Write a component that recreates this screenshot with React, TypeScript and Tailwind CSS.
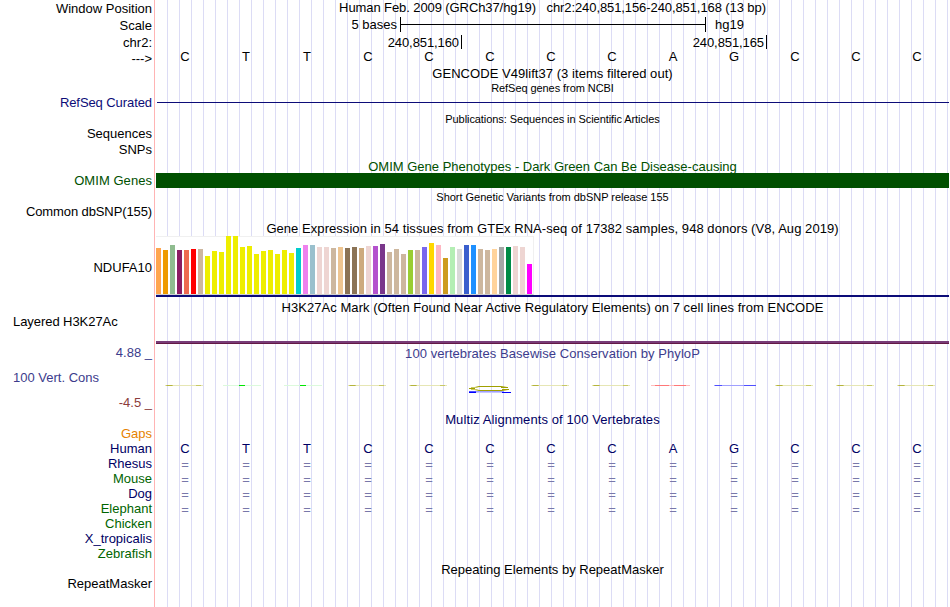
import { ReactNode } from 'react';
import clsx from 'clsx';

type Line = {
  text: string;
  className: string;
};

// track names, with the gap above each one
const labels: Line[] = [
  { text: 'Window Position', className: 'mt-px' },
  { text: 'Scale', className: 'mt-[2px]' },
  { text: 'chr2:', className: 'mt-[2px]' },
  { text: '--->', className: 'mt-px' },
  {
    text: 'RefSeq Curated',
    className: 'mt-[29px] text-[#0c0c78] tracking-[-0.08px]',
  },
  { text: 'Sequences', className: 'mt-[16px]' },
  { text: 'SNPs', className: 'mt-px' },
  { text: 'OMIM Genes', className: 'mt-[16px] text-[#005000] tracking-[0.05px]' },
  { text: 'Common dbSNP(155)', className: 'mt-[16px] tracking-[-0.11px]' },
  { text: 'NDUFA10', className: 'mt-[41px]' },
  {
    text: 'Layered H3K27Ac',
    className: 'mt-[39px] self-start ml-[13px] tracking-[-0.06px]',
  },
  { text: '4.88 _', className: 'mt-[16px] text-[#3c3c8c]' },
  {
    text: '100 Vert. Cons',
    className: 'mt-[10px] self-start ml-[13px] text-[#3c3c8c]',
  },
  { text: '-4.5 _', className: 'mt-[10px] text-[#8c3c3c]' },
  { text: 'Gaps', className: 'mt-[16px] text-[#e68200]' },
  { text: 'Human', className: 'text-[#000064]' },
  { text: 'Rhesus', className: 'text-[#000064]' },
  { text: 'Mouse', className: 'text-[#006400]' },
  { text: 'Dog', className: 'text-[#000064]' },
  { text: 'Elephant', className: 'text-[#006400]' },
  { text: 'Chicken', className: 'text-[#006400]' },
  { text: 'X_tropicalis', className: 'text-[#000064]' },
  { text: 'Zebrafish', className: 'text-[#006400]' },
  { text: 'RepeatMasker', className: 'mt-[15px]' },
];

const bases = 'CTTCCCCCAGCCC'.split('');

// one entry per GTEx tissue: [height, color]
const tissues: [number, string][] = [
  [46, '#ffa54f'],
  [44, '#ee9a00'],
  [49, '#8fbc8f'],
  [44, '#8b1c62'],
  [44, '#ee6a50'],
  [45, '#ff0000'],
  [45, '#cdb79e'],
  [38, '#eeee00'],
  [43, '#eeee00'],
  [42, '#eeee00'],
  [58, '#eeee00'],
  [58, '#eeee00'],
  [47, '#eeee00'],
  [48, '#eeee00'],
  [40, '#eeee00'],
  [43, '#eeee00'],
  [44, '#eeee00'],
  [40, '#eeee00'],
  [44, '#eeee00'],
  [41, '#eeee00'],
  [46, '#00cdcd'],
  [49, '#ee82ee'],
  [49, '#9ac0cd'],
  [47, '#eed5d2'],
  [47, '#eed5d2'],
  [46, '#cdb79e'],
  [47, '#eec591'],
  [46, '#8b7355'],
  [47, '#8b7355'],
  [46, '#cdaa7d'],
  [48, '#eed5d2'],
  [48, '#b452cd'],
  [50, '#7a378b'],
  [42, '#cdb79e'],
  [45, '#cdb79e'],
  [40, '#cdb79e'],
  [44, '#9acd32'],
  [44, '#cdb79e'],
  [47, '#7a67ee'],
  [51, '#ffd700'],
  [49, '#ffb6c1'],
  [36, '#cd9b1d'],
  [47, '#b4eeb4'],
  [45, '#d9d9d9'],
  [49, '#3a5fcd'],
  [49, '#1e90ff'],
  [45, '#cdb79e'],
  [44, '#cdb79e'],
  [45, '#ffd39b'],
  [47, '#a6a6a6'],
  [47, '#008b45'],
  [48, '#eed5d2'],
  [47, '#eed5d2'],
  [30, '#ff00ff'],
];

const Title = ({
  className,
  children,
}: {
  className?: string;
  children: ReactNode;
}) => (
  <h2 className={clsx('h-[15px] text-center whitespace-pre', className)}>
    {children}
  </h2>
);

const BaseRow = ({
  className,
  items,
}: {
  className?: string;
  items: ReactNode[];
}) => (
  <div
    className={clsx(
      'grid h-[15px] w-[793px] grid-cols-13 text-center',
      className
    )}
  >
    {items.map((item, i) => (
      <span key={i}>{item}</span>
    ))}
  </div>
);

// flattened sequence logo letter
const LogoMark = ({ base, tall }: { base: string; tall: boolean }) => {
  if (tall) {
    return (
      <svg className="ml-[9px] block" width="44" height="8" fill="none">
        <path
          d="M39 2.5 33 1.5H11L3 3.5 11 5.5H34L40 4.5"
          stroke="#a0a000"
          strokeWidth="1.2"
        />
        <path d="M1 3.5H7M33 2.5H40M34 4.5H41" stroke="#a0a000" />
        <path d="M3 2.5H9M3 4.5H9" stroke="#c8c864" />
        <path d="M1 6.5H8" stroke="#5050ff" />
        <path d="M8 6.5H36" stroke="#a0a0ff" />
        <path d="M1 7.5H8M34 7.5H43" stroke="#0000ff" />
        <path d="M8 7.5H34" stroke="#c8c8ff" />
      </svg>
    );
  }
  return (
    <svg
      className={clsx(
        'block',
        base === 'T' ? 'ml-[8px]' : base === 'A' ? 'ml-[9px]' : 'ml-[10px]'
      )}
      width="44"
      height="1"
    >
      {base === 'C' && (
        <>
          <path d="M1 .5H39" stroke="#e6e6b4" />
          <path d="M2 .5H9M32 .5H37" stroke="#c8c864" />
          <path d="M3 .5H8" stroke="#b4b43c" />
        </>
      )}
      {base === 'T' && (
        <>
          <path d="M0 .5H38" stroke="#dcfadc" />
          <path d="M16 .5H22" stroke="#00e600" />
        </>
      )}
      {base === 'A' && (
        <>
          <path d="M0 .5H39" stroke="#ffbebe" />
          <path d="M4 .5H18M23 .5H35" stroke="#ff7878" />
        </>
      )}
      {base === 'G' && (
        <>
          <path d="M1 .5H43" stroke="#a0a0ff" />
          <path d="M2 .5H9M31 .5H43" stroke="#5050ff" />
        </>
      )}
    </svg>
  );
};

const App = () => {
  return (
    <main className="flex h-[607px] w-[949px] overflow-hidden bg-white font-['Liberation_Sans',Arial,sans-serif] text-[13px] leading-[15px] text-black">
      <aside className="flex w-[154px] shrink-0 flex-col items-end pr-[2px]">
        {labels.map(({ text, className }) => (
          <div key={text} className={clsx('whitespace-pre', className)}>
            {text}
          </div>
        ))}
      </aside>

      <section className="flex w-[795px] flex-col border-l border-[#ffb4b4] bg-[repeating-linear-gradient(90deg,#dcdcf5_0_1px,transparent_1px_12px)] bg-no-repeat bg-[position:12px_0] pl-px">
        <Title className="tracking-[-0.09px]">
          Human Feb. 2009 (GRCh37/hg19)   chr2:240,851,156-240,851,168 (13 bp)
        </Title>
        <div className="mt-[2px] flex h-[15px]">
          <span className="w-[244px] pr-[3px] text-right">5 bases</span>
          <div className="flex w-[306px] items-center border-x border-black">
            <div className="h-px w-full bg-black" />
          </div>
          <span className="pl-[9px]">hg19</span>
        </div>
        <div className="mt-[2px] flex h-[16px] pt-px tracking-[-0.09px]">
          <span className="h-[14px] w-[306px] border-r border-black pr-[2px] text-right">
            240,851,160
          </span>
          <span className="h-[14px] w-[305px] border-r border-black pr-[2px] text-right">
            240,851,165
          </span>
        </div>
        <BaseRow className="-mt-px -ml-[1.5px]" items={bases} />
        <Title className="mt-[2px] tracking-[0.05px]">
          GENCODE V49lift37 (3 items filtered out)
        </Title>
        <Title className="text-[11px] tracking-[-0.07px]">
          RefSeq genes from NCBI
        </Title>
        <div className="mt-[6px] ml-px h-px bg-[#0c0c78]" />
        <Title className="mt-[9px] text-[11px] tracking-[-0.07px]">
          Publications: Sequences in Scientific Articles
        </Title>
        <Title className="mt-[32px] text-[#005000]">
          OMIM Gene Phenotypes - Dark Green Can Be Disease-causing
        </Title>
        <div className="-mt-px h-[15px] bg-[#005000]" />
        <Title className="mt-[2px] text-[11px] tracking-[-0.02px]">
          Short Genetic Variants from dbSNP release 155
        </Title>
        <Title className="mt-[16px] tracking-[0.055px]">
          Gene Expression in 54 tissues from GTEx RNA-seq of 17382 samples, 948 donors (V8, Aug 2019)
        </Title>
        <div className="flex h-[59px] w-[378px] items-end gap-[2px] border-r border-b border-r-[#f0f0f0] border-b-[#d0d0d0] bg-white shadow-[inset_0_1px_0_#f0f0f0]">
          {tissues.map(([height, color], i) => (
            <div
              key={i}
              className="w-[5px] shrink-0"
              style={{ height, backgroundColor: color }}
            />
          ))}
        </div>
        <div className="h-[2px] bg-[#0c0c78]" />
        <Title className="mt-[3px] tracking-[0.05px]">
          H3K27Ac Mark (Often Found Near Active Regulatory Elements) on 7 cell lines from ENCODE
        </Title>
        <div className="mt-[26px] h-[3px] border-b border-[#641946] bg-[#783c78]" />
        <Title className="mt-[2px] text-[#3c3c8c] tracking-[0.06px]">
          100 vertebrates Basewise Conservation by PhyloP
        </Title>
        <BaseRow
          className="mt-[24px] -ml-[2px] h-[27px]"
          items={bases.map((base, i) => (
            <LogoMark base={base} tall={i === 5} />
          ))}
        />
        <Title className="text-[#000064] tracking-[0.1px]">
          Multiz Alignments of 100 Vertebrates
        </Title>
        <BaseRow
          className="mt-[14px] -ml-[1.5px] text-[#000064]"
          items={bases}
        />
        {['Rhesus', 'Mouse', 'Dog', 'Elephant'].map((species) => (
          <BaseRow
            key={species}
            className="-ml-[1.5px] pt-px text-[#7878aa]"
            items={bases.map(() => '=')}
          />
        ))}
        <Title className="mt-[46px]">Repeating Elements by RepeatMasker</Title>
      </section>
    </main>
  );
};

export default App;
